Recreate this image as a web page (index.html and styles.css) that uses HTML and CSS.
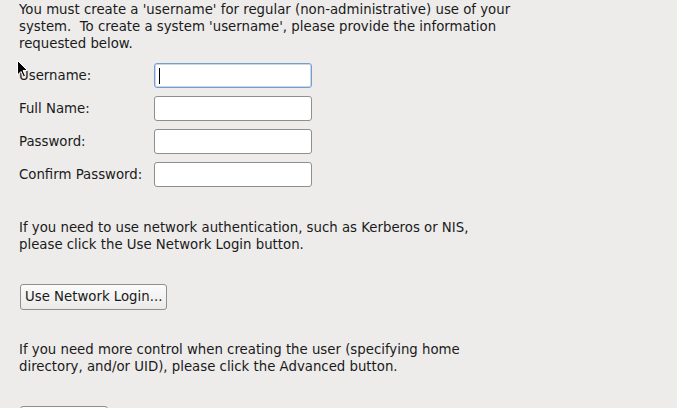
FILE: index.html
```html
<!DOCTYPE html>
<html>
<head>
<meta charset="utf-8">
<link rel="stylesheet" href="styles.css">
</head>
<body>
<div class="page">
  <p class="para first">You must create a 'username' for regular (non-administrative) use of your<br>system.&nbsp; To create a system 'username', please provide the information<br>requested below.</p>
  <div class="form">
    <label class="lbl">Username:</label>
    <div class="field focused"><span class="caret"></span></div>
    <label class="lbl">Full Name:</label>
    <div class="field"></div>
    <label class="lbl">Password:</label>
    <div class="field"></div>
    <label class="lbl">Confirm Password:</label>
    <div class="field"></div>
  </div>
  <p class="para">If you need to use network authentication, such as Kerberos or NIS,<br>please click the Use Network Login button.</p>
  <div class="btnrow"><span class="btn">Use Network Login...</span></div>
  <p class="para">If you need more control when creating the user (specifying home<br>directory, and/or UID), please click the Advanced button.</p>
  <div class="btnrow"><span class="btn adv">Advanced...</span></div>
</div>
<svg class="pointer" width="12" height="19" viewBox="0 0 12 19"><path d="M0.5 0.5 L0.5 15 L4 11.5 L6.5 17 L8.5 16 L6 10.5 L10.5 10.5 Z" fill="#000" stroke="#fff" stroke-width="1"/></svg>
</body>
</html>
```
FILE: styles.css
```css
html, body {
  margin: 0;
  padding: 0;
  background: #edeceb;
  overflow: hidden;
}
body {
  width: 677px;
  height: 408px;
  position: relative;
  font-family: "DejaVu Sans", sans-serif;
  font-size: 13.3px;
  color: #1a1a1a;
}
.page {
  padding: 0 0 0 19px;
}
.para {
  margin: 0;
  line-height: 17px;
  white-space: nowrap;
}
.first {
  padding-top: 1px;
}
.form {
  display: grid;
  grid-template-columns: 135px 158px;
  grid-auto-rows: 25px;
  row-gap: 8px;
  margin: 11px 0 32px 0;
  align-items: center;
}
.lbl {
  line-height: 25px;
}
.field {
  height: 25px;
  box-sizing: border-box;
  border: 1px solid #8e8e8e;
  border-radius: 3px;
  background: #fff;
  position: relative;
}
.field.focused {
  border-color: #7a9ccb;
  box-shadow: inset 0 0 0 1px #c9d8ec;
}
.caret {
  position: absolute;
  left: 4px;
  top: 4px;
  width: 1px;
  height: 16px;
  background: #000;
}
.btnrow {
  margin: 31px 0 31px 1px;
  display: flex;
}
.btn {
  display: inline-block;
  box-sizing: border-box;
  height: 26px;
  line-height: 24px;
  padding: 0 4px;
  border: 1px solid #8f8f8f;
  border-radius: 3px;
  background: linear-gradient(#fbfbfb, #ebeae9);
}
.adv {
  width: 88px;
}
.pointer {
  position: absolute;
  left: 17px;
  top: 60px;
}
```
